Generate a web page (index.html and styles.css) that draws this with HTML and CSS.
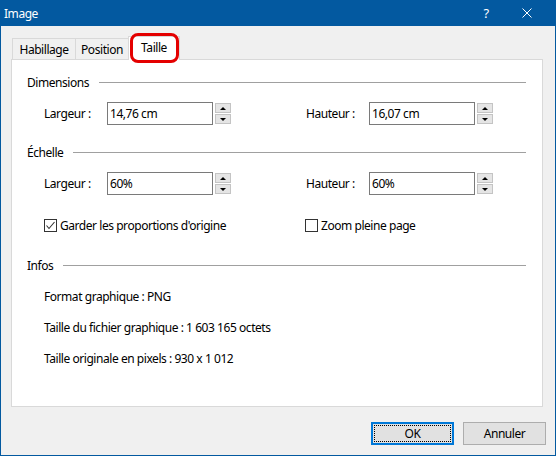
FILE: index.html
```html
<!DOCTYPE html>
<html lang="fr">
<head>
    <meta charset="UTF-8">
    <title>Image</title>
    <link rel="stylesheet" href="styles.css">
</head>
<body>
    <div class="window">
        <!-- barre de titre -->
        <div class="titlebar">
            <span class="title">Image</span>
            <span class="help">?</span>
            <span class="close">
                <svg width="10" height="10" viewBox="0 0 10 10"><path d="M0.5 0.5 L9.5 9.5 M9.5 0.5 L0.5 9.5" stroke="#fff" stroke-width="1" fill="none"/></svg>
            </span>
        </div>

        <div class="content">
            <div class="tabs">
                <div class="tab tab-habillage">Habillage</div>
                <div class="tab tab-position">Position</div>
                <div class="tab tab-taille active">Taille<span class="mark"></span></div>
            </div>

            <div class="panel">
                <div class="group">
                    <span>Dimensions</span><span class="rule"></span>
                </div>
                <div class="row row-first">
                    <div class="field">
                        <label>Largeur :</label>
                        <div class="input">14,76 cm</div>
                        <div class="spin"><span class="up"></span><span class="down"></span></div>
                    </div>
                    <div class="field">
                        <label>Hauteur :</label>
                        <div class="input">16,07 cm</div>
                        <div class="spin"><span class="up"></span><span class="down"></span></div>
                    </div>
                </div>

                <div class="group group-next">
                    <span>Échelle</span><span class="rule"></span>
                </div>
                <div class="row row-first">
                    <div class="field">
                        <label>Largeur :</label>
                        <div class="input">60%</div>
                        <div class="spin"><span class="up"></span><span class="down"></span></div>
                    </div>
                    <div class="field">
                        <label>Hauteur :</label>
                        <div class="input">60%</div>
                        <div class="spin"><span class="up"></span><span class="down"></span></div>
                    </div>
                </div>

                <div class="row checks">
                    <div class="check">
                        <span class="box"><svg width="11" height="11" viewBox="0 0 11 11"><path d="M1.5 5.5 L4 8.5 L9.5 2" stroke="#333" stroke-width="1.1" fill="none"/></svg></span>
                        Garder les proportions d'origine
                    </div>
                    <div class="check">
                        <span class="box"></span>
                        Zoom pleine page
                    </div>
                </div>

                <div class="group group-infos">
                    <span>Infos</span><span class="rule"></span>
                </div>
                <div class="info">
                    <p>Format graphique : PNG</p>
                    <p>Taille du fichier graphique : 1 603 165 octets</p>
                    <p>Taille originale en pixels : 930 x 1 012</p>
                </div>
            </div>

            <div class="footer">
                <button class="default"><span>OK</span></button>
                <button>Annuler</button>
            </div>
        </div>
    </div>
</body>
</html>
```

FILE: styles.css
```css
* {
    box-sizing: border-box;
}
body {
    margin: 0;
    font-family: "Noto Sans", "Liberation Sans", sans-serif;
    font-size: 12px;
    letter-spacing: -0.45px;
    color: #000;
}
.window {
    width: 556px;
    height: 456px;
    background: #f0f0f0;
    border: 1px solid #0359a0;
    border-top: 0;
    display: flex;
    flex-direction: column;
}

/* barre de titre */
.titlebar {
    height: 26px;
    background: #0359a0;
    color: #fff;
    display: flex;
    align-items: center;
    padding: 0 23px 0 3px;
}
.title {
    flex: 1;
}
.help {
    width: 12px;
    text-align: center;
    margin-right: 30px;
    font-size: 13px;
}
.close {
    width: 10px;
    height: 10px;
    display: flex;
}

.content {
    flex: 1;
    padding: 10px 12px 0 10px;
}

/* onglets */
.tabs {
    display: flex;
    align-items: flex-end;
    height: 23px;
    padding-left: 1px;
}
.tab {
    height: 21px;
    border: 1px solid #d9d9d9;
    border-bottom: 0;
    background: #f0f0f0;
    margin-right: -1px;
    display: flex;
    align-items: center;
    justify-content: center;
}
.tab-habillage { width: 64px; }
.tab-position { width: 54px; }
.tab-taille { width: 52px; }
.tab.active {
    position: relative;
    z-index: 1;
    height: 24px;
    margin-bottom: -1px;
    background: #fff;
    padding-bottom: 2px;
}
.mark {
    position: absolute;
    left: 1px;
    top: -4px;
    width: 49px;
    height: 30px;
    border: 3px solid #e40000;
    border-radius: 8px;
}

/* panneau */
.panel {
    height: 348px;
    background: #fff;
    border: 1px solid #d9d9d9;
    padding: 14px 16px 0 15px;
}
.group {
    display: flex;
    align-items: center;
    height: 16px;
}
.rule {
    flex: 1;
    height: 1px;
    background: #a0a0a0;
    margin-left: 10px;
}
.group-next {
    margin-top: 19px;
}
.group-infos {
    margin-top: 24px;
}
.row {
    display: grid;
    grid-template-columns: 262px 200px;
    padding-left: 17px;
}
.row-first {
    margin-top: 12px;
}
.field {
    display: flex;
    align-items: center;
    height: 23px;
}
.field label {
    width: 63px;
}
.input {
    width: 106px;
    height: 23px;
    border: 1px solid #7a7a7a;
    padding: 0 2px;
    line-height: 21px;
}
.spin {
    margin-left: 2px;
    display: flex;
    flex-direction: column;
    gap: 1px;
}
.spin span {
    width: 16px;
    height: 10px;
    background: #e5e5e5;
    border: 1px solid #c4c4c4;
    display: flex;
    align-items: center;
    justify-content: center;
}
.spin .up::after {
    content: "";
    border-left: 3px solid transparent;
    border-right: 3px solid transparent;
    border-bottom: 3px solid #000;
}
.spin .down::after {
    content: "";
    border-left: 3px solid transparent;
    border-right: 3px solid transparent;
    border-top: 3px solid #000;
}

.checks {
    margin-top: 22px;
    height: 16px;
    grid-template-columns: 261px 200px;
}
.check {
    display: flex;
    align-items: center;
}
.box {
    width: 13px;
    height: 13px;
    border: 1px solid #333;
    margin-right: 3px;
    display: flex;
    align-items: center;
    justify-content: center;
}

.info {
    padding-left: 17px;
    margin-top: 16px;
}
.info p {
    margin: 0 0 15px;
    line-height: 16px;
}

/* boutons */
.footer {
    display: flex;
    justify-content: flex-end;
    gap: 9px;
    margin-top: 15px;
    padding-right: 0;
    margin-right: -3px;
}
.footer button {
    width: 83px;
    height: 23px;
    background: #e1e1e1;
    border: 1px solid #adadad;
    font-family: inherit;
    font-size: 12px;
    letter-spacing: -0.45px;
    padding: 0;
    color: #000;
}
.footer button.default {
    border: 2px solid #0078d7;
    padding: 1px;
}
.footer button.default span {
    display: flex;
    align-items: center;
    justify-content: center;
    height: 100%;
    border: 1px dotted #000;
}
```
